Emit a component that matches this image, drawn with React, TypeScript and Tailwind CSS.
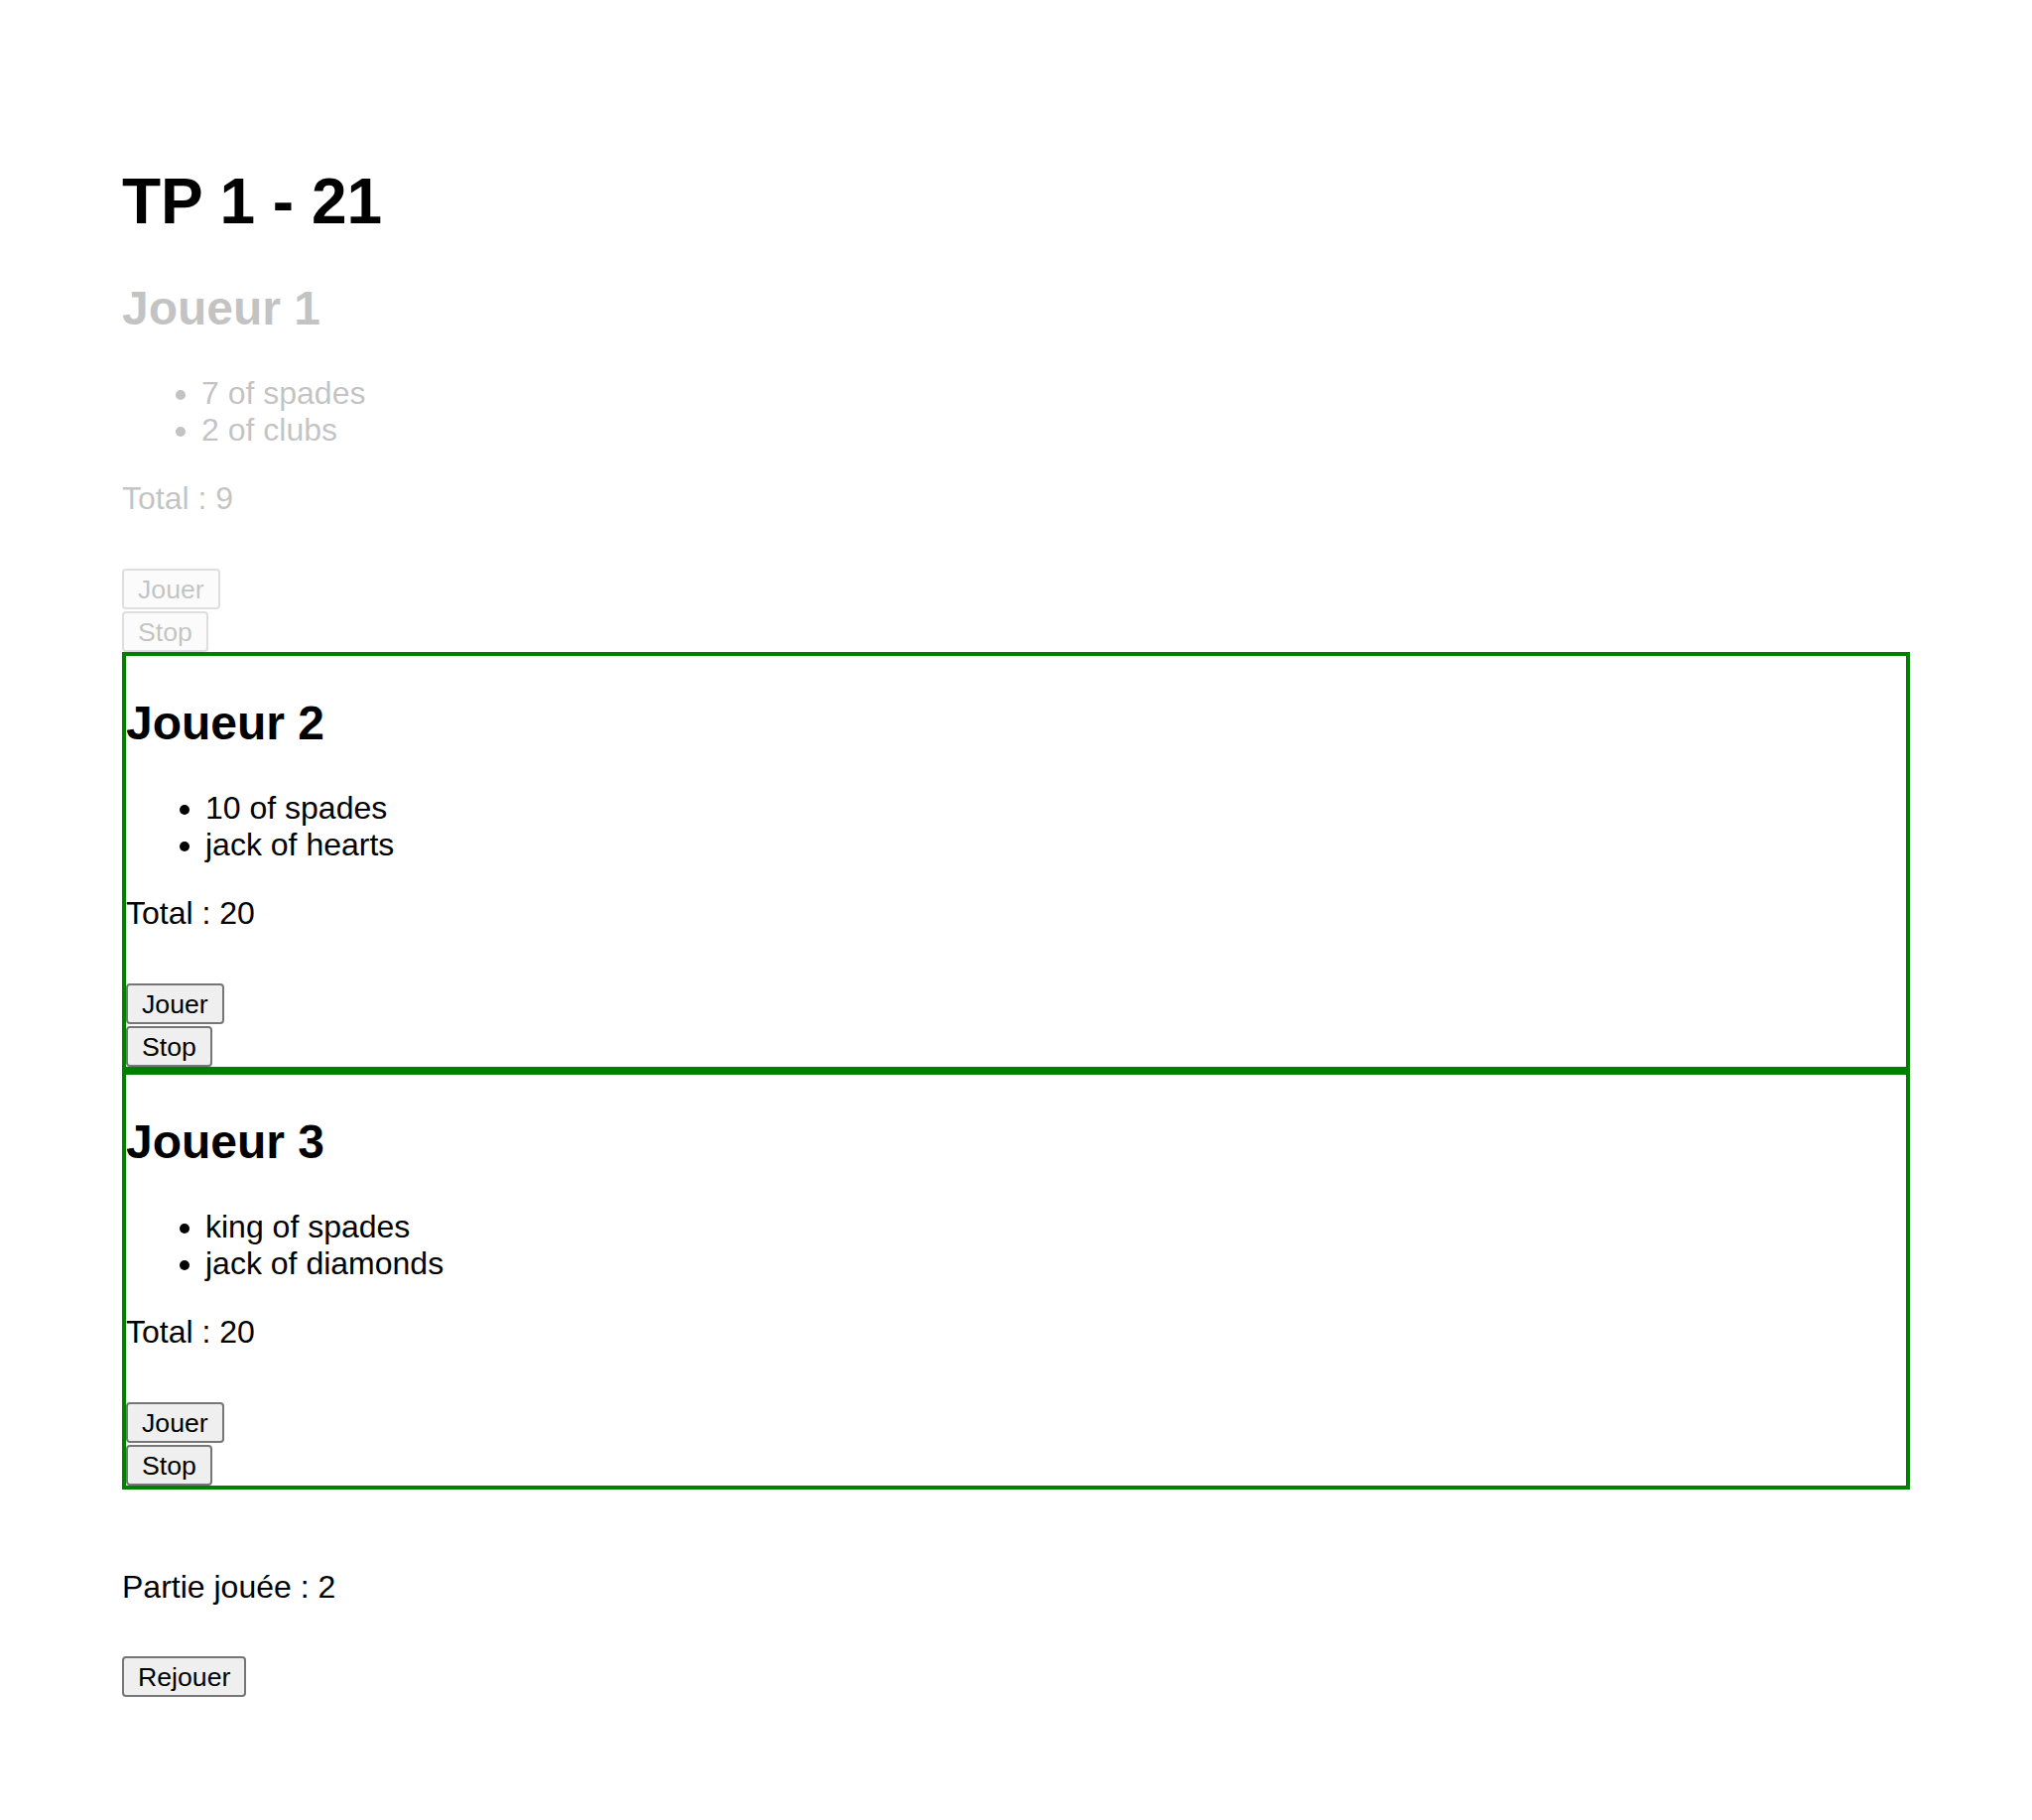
import { useState } from "react";

interface Player {
  name: string;
  cards: string[];
  total: number;
  active: boolean;
}

const players: Player[] = [
  { name: "Joueur 1", cards: ["7 of spades", "2 of clubs"], total: 9, active: false },
  { name: "Joueur 2", cards: ["10 of spades", "jack of hearts"], total: 20, active: true },
  { name: "Joueur 3", cards: ["king of spades", "jack of diamonds"], total: 20, active: true },
];

const btn =
  "h-[41px] px-[14px] text-[26.67px] leading-[30px] text-black bg-[#efefef] border-2 border-[#767676] rounded-[4px] self-start";

const PlayerBlock = ({ player }: { player: Player }) => {
  return (
    <div
      className={
        player.active
          ? "border-4 border-[#008000]"
          : "opacity-[0.23]"
      }
    >
      <h2 className="text-[48px] leading-[55px] font-bold mt-[40px]">{player.name}</h2>
      <ul className="list-disc pl-[80px] mt-[40px] text-[32px] leading-[37px]">
        {player.cards.map((card) => (
          <li key={card}>{card}</li>
        ))}
      </ul>
      <p className="mt-[32px] text-[32px] leading-[37px]">Total : {player.total}</p>
      <div className="flex flex-col gap-[2px] mt-[52px]">
        <button className={btn}>Jouer</button>
        <button className={btn}>Stop</button>
      </div>
    </div>
  );
};

export default function App() {
  const [games] = useState(2);

  return (
    <div
      className="min-h-screen bg-white text-black p-[123px]"
      style={{ fontFamily: '"Liberation Sans", Arial, sans-serif' }}
    >
      <h1 className="text-[64px] leading-[74px] font-bold mt-[43px] mb-[43px]">TP 1 - 21</h1>
      {players.map((player) => (
        <PlayerBlock key={player.name} player={player} />
      ))}

      <p className="mt-[80px] text-[32px] leading-[37px]">Partie jouée : {games}</p>
      <div className="flex flex-col mt-[51px]">
        <button className={btn}>Rejouer</button>
      </div>
    </div>
  );
}
